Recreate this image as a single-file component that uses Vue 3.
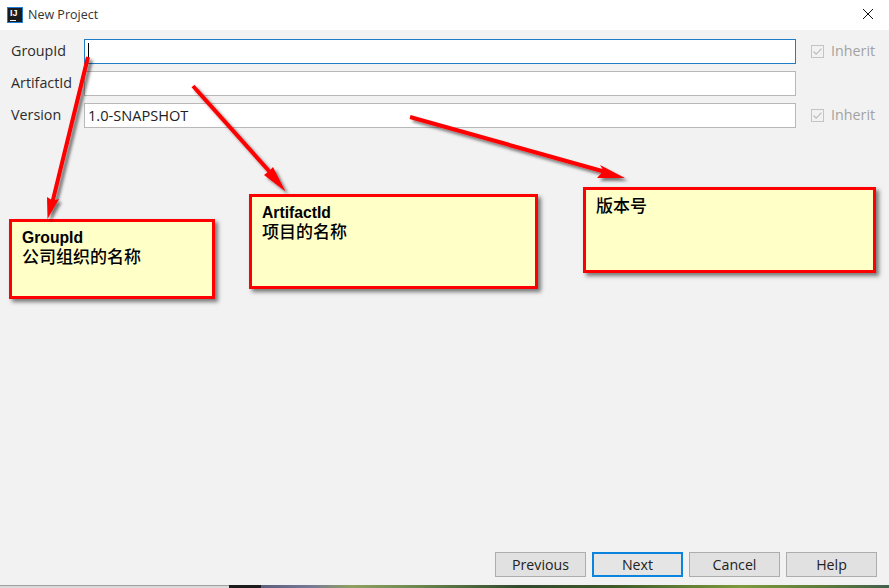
<template>
  <div class="dialog">
    <header class="titlebar">
      <div class="logo"><span class="logo-text">IJ</span><span class="logo-bar"></span></div>
      <span class="title">New Project</span>
      <svg class="close" width="12" height="12" viewBox="0 0 12 12"><path d="M1 1L11 11M11 1L1 11" stroke="#111" stroke-width="1" fill="none"/></svg>
    </header>
    <main class="content">
      <div class="form">
        <div v-for="f in fields" :key="f.label" class="row">
          <label class="label">{{ f.label }}</label>
          <div class="input" :class="{ focused: f.focused }">
            <span v-if="f.focused" class="caret"></span>{{ f.value }}
          </div>
          <div class="inherit">
            <template v-if="f.inherit">
              <svg class="check" width="13" height="13" viewBox="0 0 13 13"><rect x=".5" y=".5" width="12" height="12" fill="#f2f2f2" stroke="#c4c4c4"/><path d="M2.5 6.5L5.2 9.2L10.5 3.6" stroke="#bdbdbd" stroke-width="1.2" fill="none"/></svg>
              <span class="inherit-text">Inherit</span>
            </template>
          </div>
        </div>
      </div>
      <div class="spacer"></div>
      <footer class="buttons">
        <button v-for="b in buttons" :key="b" class="btn" :class="{ primary: b === 'Next' }">{{ b }}</button>
      </footer>
    </main>
    <div class="desktop">
      <div class="desk-a"></div><div class="desk-b"></div><div class="desk-c"></div>
    </div>

    <div class="note note-1">GroupId<span class="cjk">公司组织的名称</span></div>
    <div class="note note-2">ArtifactId<span class="cjk">项目的名称</span></div>
    <div class="note note-3"><span class="cjk">版本号</span></div>

    <svg class="arrows" width="889" height="588" viewBox="0 0 889 588">
      <defs>
        <filter id="sh" x="-20%" y="-20%" width="140%" height="140%">
          <feDropShadow dx="3" dy="3" stdDeviation="1.6" flood-color="#000" flood-opacity=".5"/>
        </filter>
      </defs>
      <g filter="url(#sh)" fill="#f00">
        <path d="M86 56.5L90 57.5L55 200L59 199L47.5 219L47 197L51 199.5Z"/>
        <path d="M191.5 87.3L194.5 84.7L270.5 169.7L273 167L285.5 191.5L264 175L267.5 172.3Z"/>
        <path d="M409.5 119L410.5 115L602.5 169L600 165L625 178L597 178L601.5 173Z"/>
      </g>
    </svg>
  </div>
</template>

<script setup>
const fields = [
  { label: 'GroupId', value: '', focused: true, inherit: true },
  { label: 'ArtifactId', value: '', inherit: false },
  { label: 'Version', value: '1.0-SNAPSHOT', inherit: true }
]
const buttons = ['Previous', 'Next', 'Cancel', 'Help']
</script>

<style>
html, body { margin: 0; background: #f2f2f2; overflow: hidden; }
</style>

<style scoped>
.dialog {
  position: relative;
  width: 889px;
  height: 588px;
  display: flex;
  flex-direction: column;
  background: #f2f2f2;
  font-family: "Open Sans", "Noto Sans", "Noto Sans CJK SC", sans-serif;
  overflow: hidden;
}
.titlebar {
  height: 30px;
  flex: none;
  display: flex;
  align-items: center;
  background: #fff;
  padding: 0 15px 0 7px;
}
.logo {
  position: relative;
  box-sizing: border-box;
  width: 16px;
  height: 16px;
  background: #1c1c1c;
  border: 1px solid #1f7fd6;
  margin-right: 5px;
}
.logo-text {
  position: absolute;
  left: 2px;
  top: 1px;
  font: bold 9px/9px "Liberation Sans", sans-serif;
  color: #fff;
}
.logo-bar {
  position: absolute;
  left: 2px;
  bottom: 1px;
  width: 6px;
  height: 1px;
  background: #fff;
}
.title {
  font-size: 12.5px;
  line-height: 16px;
  padding-bottom: 1px;
  color: #333;
}
.close { margin-left: auto; margin-bottom: 2px; }
.content {
  flex: 1;
  display: flex;
  flex-direction: column;
  min-height: 0;
}
.form {
  padding-top: 9px;
  display: flex;
  flex-direction: column;
  gap: 7px;
}
.row {
  display: flex;
  align-items: center;
  height: 25px;
}
.label {
  width: 73px;
  margin-left: 11px;
  padding-bottom: 2px;
  font-size: 14.3px;
  color: #2c2c2c;
}
.input {
  box-sizing: border-box;
  width: 712px;
  height: 25px;
  background: #fff;
  border: 1px solid #b8b8b8;
  padding-left: 3px;
  font-size: 14.6px;
  line-height: 22px;
  color: #222;
  position: relative;
}
.input.focused { border-color: #1e7dc8; }
.caret {
  position: absolute;
  left: 3px;
  top: 3px;
  width: 1px;
  height: 17px;
  background: #000;
}
.inherit {
  display: flex;
  align-items: center;
  margin-left: 15px;
  gap: 7px;
  font-size: 14.3px;
  color: #a2a2a2;
}
.inherit-text { padding-bottom: 2px; }
.spacer { flex: 1; }
.buttons {
  display: flex;
  gap: 6px;
  justify-content: flex-end;
  padding: 0 12px 8px 0;
}
.btn {
  box-sizing: border-box;
  width: 91px;
  height: 25px;
  padding: 0;
  background: #e1e1e1;
  border: 1px solid #adadad;
  border-radius: 0;
  font-family: inherit;
  font-size: 14.2px;
  color: #222;
}
.btn.primary {
  border: 2px solid #0a84de;
  background: #e5e5e5;
}
.desktop {
  flex: none;
  height: 3px;
  display: flex;
}
.desk-a { width: 229px; background: linear-gradient(#777, #d9d9d9 40%, #dcdcdc); }
.desk-b { width: 32px; background: #1b1b1b; }
.desk-c {
  flex: 1;
  background: linear-gradient(90deg, #5b5f7c 0, #777a96 50px, #8ea060 90px, #6f8a50 150px, #2f4a2c 260px, #3c5a2a 350px, #7d9a3c 480px, #5d7d3a 560px, #42604a 628px);
}
.note {
  position: absolute;
  box-sizing: border-box;
  background: #ffffc8;
  border: 3px solid #f00;
  box-shadow: 3px 3px 4px rgba(0, 0, 0, .5);
  padding: 6px 10px;
  font-family: "Liberation Sans", "Noto Sans CJK SC", sans-serif;
  font-weight: 700;
  font-size: 15.7px;
  line-height: 19px;
  color: #000;
}
.cjk {
  display: block;
  margin-top: -1px;
  font-size: 17px;
  line-height: 19px;
  font-weight: 500;
  font-family: "Noto Sans CJK SC", sans-serif;
}
.note-1 { left: 9px; top: 219px; width: 206px; height: 80px; }
.note-2 { left: 249px; top: 194px; width: 289px; height: 95px; }
.note-3 { left: 583px; top: 187px; width: 293px; height: 86px; }
.arrows {
  position: absolute;
  left: 0;
  top: 0;
  pointer-events: none;
}
</style>
